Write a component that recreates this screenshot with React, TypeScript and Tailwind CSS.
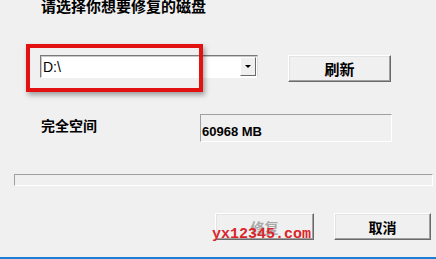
import React from "react";

const cjk = { fontFamily: '"Noto Sans CJK SC", "Noto Sans", sans-serif' };

function RaisedButton({ children, disabled, className, size }: { children: React.ReactNode; disabled?: boolean; className?: string; size?: string }) {
  return (
    <div
      className={
        "flex items-center justify-center bg-[#f0f0f0] border border-t-white border-l-white border-b-[#6a6a6a] border-r-[#6a6a6a] shadow-[inset_-1px_-1px_0_#a0a0a0,inset_1px_1px_0_#e3e3e3] " +
        (className || "")
      }
    >
      <span
        className={(size || "text-[14px]") + " font-bold leading-none " + (disabled ? "text-[#a9a9a9]" : "text-black")}
        style={cjk}
      >
        {children}
      </span>
    </div>
  );
}

export default function App() {
  return (
    <div className="relative w-[436px] h-[259px] bg-[#f0f0f0] overflow-hidden flex flex-col">
      <div className="pl-[41px] -mt-[3px] h-[17px] flex items-center text-[15px] font-bold text-black leading-none" style={cjk}>
        请选择你想要修复的磁盘
      </div>

      {/* row: combo + refresh */}
      <div className="flex items-start mt-[41px] h-[27px]">
        <div className="ml-[40px] w-[218px] h-[23px] bg-white border border-t-[#7a7a7a] border-l-[#7a7a7a] border-b-white border-r-[#dcdcdc] shadow-[inset_1px_1px_0_#c8c8c8] flex items-center">
          <span className="pl-[2px] flex-1 text-[14px] text-black leading-none" style={{ fontFamily: '"Liberation Sans", Arial, sans-serif' }}>
            D:\
          </span>
          <div className="w-[16px] h-[19px] mr-[1px] bg-[#f0f0f0] border border-t-white border-l-white border-b-[#6a6a6a] border-r-[#6a6a6a] flex items-center justify-center">
            <div className="w-0 h-0 border-l-[3px] border-r-[3px] border-t-[3px] border-l-transparent border-r-transparent border-t-black" />
          </div>
        </div>
        <RaisedButton size="text-[15px]" className="ml-[30px] w-[103px] h-[27px]">刷新</RaisedButton>
      </div>

      {/* row: space */}
      <div className="flex items-start mt-[32px] h-[28px]">
        <div className="ml-[41px] w-[159px] pt-[4px] text-[14px] font-bold text-black leading-none" style={cjk}>
          完全空间
        </div>
        <div className="w-[192px] h-[28px] border border-t-[#a0a0a0] border-l-[#a0a0a0] border-b-white border-r-white pl-[1px] pt-[3px]">
          <span className="text-[13px] font-bold text-black leading-none" style={{ fontFamily: '"Liberation Sans", Arial, sans-serif' }}>
            60968 MB
          </span>
        </div>
      </div>

      {/* progress */}
      <div className="ml-[14px] mt-[32px] w-[419px] h-[12px] border border-t-[#a0a0a0] border-l-[#a0a0a0] border-b-white border-r-white" />

      {/* buttons */}
      <div className="flex mt-[27px]">
        <RaisedButton disabled className="ml-[215px] w-[99px] h-[27px]">修复</RaisedButton>
        <RaisedButton className="ml-[20px] w-[97px] h-[27px]">取消</RaisedButton>
      </div>

      <div className="absolute left-0 right-0 bottom-0 h-[2px] bg-[#1a7ed4]" />

      {/* red annotation box */}
      <div className="absolute left-[26px] top-[44px] w-[177px] h-[48px] border-[4px] border-[#e31212] shadow-[2px_3px_5px_rgba(0,0,0,0.35)]" />

      {/* watermark */}
      <div
        className="absolute left-[212px] top-[227px] text-[15px] font-bold text-[#d8262b] leading-none"
        style={{ fontFamily: '"Liberation Mono", "Courier New", monospace' }}
      >
        yx12345.com
      </div>
    </div>
  );
}
